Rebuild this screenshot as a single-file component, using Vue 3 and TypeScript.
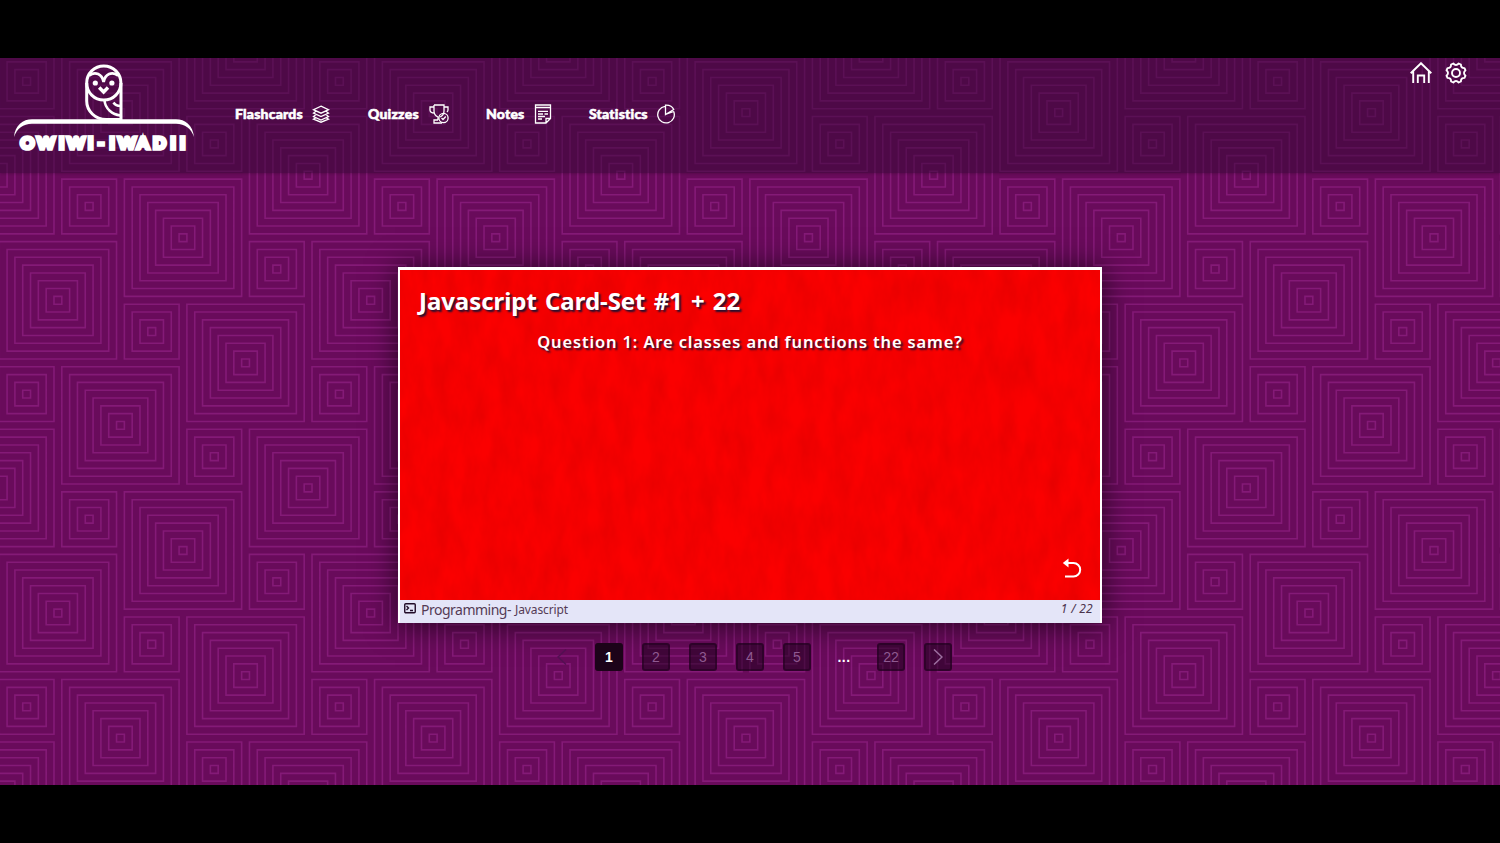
<script setup lang="ts">
const u = 62.55
const step = u / 8

function rings(cx: number, cy: number, count: number): string {
  let d = ''
  for (let k = 1; k <= count; k++) {
    const h = (k - 0.5) * step
    d += `M${(cx - h).toFixed(2)} ${(cy - h).toFixed(2)}h${(2 * h).toFixed(2)}v${(2 * h).toFixed(2)}h${(-2 * h).toFixed(2)}z`
  }
  return d
}

let patternPath = ''
for (let a = -12; a < 16; a++) {
  for (let b = -10; b < 16; b++) {
    const x = 57.9 + a * 2 * u + b * u
    const y = 242.3 - a * u + b * 2 * u
    if (x < -130 || x > 1630 || y < -130 || y > 860) continue
    patternPath += rings(x, y, 8) + rings(x + 0.5 * u, y - 1.5 * u, 4)
  }
}

const pages: string[] = ['1', '2', '3', '4', '5', '...', '22']
</script>

<template>
  <div class="screen">
    <div class="app">
      <svg class="pattern" width="1500" height="727" viewBox="0 0 1500 727"><path :d="patternPath" /></svg>

      <header class="header">
        <div class="brand">
          <svg class="owl" width="184" height="78" viewBox="0 0 184 78" fill="none">
            <g stroke="#fff" stroke-width="3">
              <path d="M74.700 20v18c0 10 8.500 18.500 19.500 18.500h14.800V20" />
              <circle cx="91.800" cy="20" r="17.100" />
              <path d="M77 12.500c6.500-4.500 13-1.500 14.600 6.500 1.600-8 8.100-11 14.600-6.500" stroke-width="2.800" />
              <path d="M92.500 37c.5 9 8 14.500 16 15.500M101.500 39.500c1.500 2.500 4 3.500 7 3.500" stroke-width="2.600" />
              <path d="M87.200 24.500l4.400 4.500 4.400-4.500" stroke-width="3.400" />
            </g>
            <circle cx="83.300" cy="20" r="2.600" fill="#fff" /><circle cx="99.900" cy="20" r="2.600" fill="#fff" />
            <path fill="#fff" d="M2 74C3 62 11 56.200 20 56.200H164c9 0 17 6 18 17.800-3-9-9-13-18-13.300H20C11 61 5 65 2 74z" />
          </svg>
          <svg class="wordmark" width="172" height="20" viewBox="0 0 172 20"><text x="8.500 27 42.500 57 71.500 82 93 108 124 140.500 154 163.500" y="15">OWIWI-IWADII</text></svg>
        </div>

        <nav class="nav">
          <a class="link l1"><span>Flashcards</span>
            <svg width="18" height="18" viewBox="0 0 18 18"><path d="M9 1.200l7.500 3.500L9 8.200 1.500 4.700zM4 6.200L1.500 8.100 9 11.600l7.500-3.500L14 6.200M4 9.600l-2.500 1.900L9 15l7.500-3.500L14 9.600M4 12.800l-2.500 1.400L9 17.200l7.500-3-2.500-1.400" /></svg></a>
          <a class="link l2"><span>Quizzes</span>
            <svg width="20" height="20" viewBox="0 0 20 20"><path d="M5 1h10v6c0 3-1.500 5-4 6M5 1v6c0 3 1.500 5 4 6v3M5 3H1v3c0 2 2 3 4.500 3M15 3h4v3c0 1-.5 1.500-1 2M9 16H5v3h8" /><circle cx="14.500" cy="14" r="4.600" /><path d="M12.500 14l1.500 1.500 2.800-3" /></svg></a>
          <a class="link l3"><span>Notes</span>
            <svg width="18" height="20" viewBox="0 0 18 20"><path d="M1.500 1h15v13.500L12 19H1.500zM1.500 3.500h15M12 19v-4.500h4.500M4 7.300h10M4 10h5M10.500 10h3.500M4 12.500h7M4 15h4" /></svg></a>
          <a class="link l4"><span>Statistics</span>
            <svg width="20" height="20" viewBox="0 0 20 20"><path d="M9 2.400a8.300 8.300 0 1 0 8.700 5.100M9.500 10.500V1.200c4-.2 7 1.500 8.200 4.300zM9.500 10.500l8.200-3" /></svg></a>
        </nav>

        <div class="tools">
          <svg width="22" height="22" viewBox="0 0 22 22"><path d="M.7 11.200L11 1.200l10.300 10M3.200 9v12M18.800 9v12M7.800 21v-7.500h6.400V21" /></svg>
          <svg width="22" height="22" viewBox="0 0 22 22"><path d="M8.300 1.500Q11 4.500 13.700 1.500L15.900 2.500Q15.800 6.200 19.500 6.100L20.500 8.300Q17.500 11 20.500 13.700L19.500 15.900Q15.800 15.800 15.900 19.500L13.700 20.500Q11 17.500 8.300 20.500L6.100 19.500Q6.200 15.800 2.500 15.900L1.500 13.700Q4.500 11 1.500 8.300L2.500 6.100Q6.200 6.200 6.100 2.500Z" stroke-linejoin="round" /><circle cx="11" cy="11" r="4" /></svg>
        </div>
      </header>

      <main class="main">
        <section class="card">
          <div class="face">
            <svg class="texture" width="700" height="331">
              <filter id="fibres" x="0" y="0" width="100%" height="100%">
                <feTurbulence type="fractalNoise" baseFrequency="0.06 0.025" numOctaves="5" seed="21" />
                <feColorMatrix values="0 0 0 0 0.5  0 0 0 0 0  0 0 0 0 0  0.45 0 0 0 -0.12" />
              </filter>
              <rect width="700" height="331" filter="url(#fibres)" />
            </svg>
            <h1>Javascript Card-Set #1 + 22</h1>
            <p>Question 1: Are classes and functions the same?</p>
            <svg class="flip" width="20" height="20" viewBox="0 0 20 20"><path d="M4 5h7.500a6.700 6.700 0 0 1 0 13.400H3" fill="none" stroke="#fff" stroke-width="2" /><path d="M.8 5L6.500.5v9z" fill="#fff" /></svg>
          </div>
          <footer class="foot">
            <svg width="12" height="11" viewBox="0 0 12 11"><rect x=".75" y=".75" width="10.500" height="9" rx="1" /><path d="M2.500 3l2 2-2 2M6 7.500h3" /></svg>
            <span class="topic">Programming-</span><span class="sub">Javascript</span>
            <em>1 / 22</em>
          </footer>
        </section>

        <div class="pager">
          <span class="page prev"><svg width="10" height="16" viewBox="0 0 10 16"><path d="M9 .5L1 8l8 7.500" /></svg></span>
          <span v-for="p in pages" :key="p" class="page" :class="{ active: p === '1', dots: p === '...' }">{{ p }}</span>
          <span class="page next"><svg width="10" height="16" viewBox="0 0 10 16"><path d="M1 .5L9 8l-8 7.500" /></svg></span>
        </div>
      </main>
    </div>
  </div>
</template>

<style>
html, body { background: #000; overflow: hidden; }
</style>

<style scoped>
.screen { box-sizing: border-box; width: 1500px; height: 843px; padding: 58px 0; background: #000; font-family: "Noto Sans", "Open Sans", sans-serif; }
.app { position: relative; height: 727px; background: #690b5b; overflow: hidden; }
.pattern { position: absolute; inset: 0; }
.pattern path { fill: none; stroke: #841a77; stroke-width: 1.600; }
.header { position: relative; display: flex; height: 115px; background: rgba(72, 8, 66, .25); background: rgba(54, 8, 54, .52); box-shadow: 0 0 3px rgba(0, 0, 0, .3); color: #fff; }
.brand { width: 208px; padding: 5px 0 0 12px; box-sizing: border-box; flex: none; }
.owl { display: block; }
.wordmark { display: block; margin: -7px 0 0 7px; overflow: visible; }
.wordmark text { font: 900 17px Lato, sans-serif; fill: #fff; stroke: #fff; stroke-width: 3.700px; text-anchor: middle; }
.nav { display: flex; padding: 0 0 3px 27px; align-items: center; }
.link { display: flex; align-items: center; justify-content: space-between; font: 900 14px Lato, sans-serif; -webkit-text-stroke: .6px #fff; }
.link span { letter-spacing: .2px; padding-bottom: 2px; }
.link svg, .tools svg { fill: none; stroke: #fff; stroke-width: 1.3; }
.l1 { width: 95px; margin-right: 38px; }
.l2 { width: 81px; margin-right: 37px; }
.l3 { width: 66px; margin-right: 37px; }
.l4 { width: 87px; }
.tools { display: flex; gap: 13px; margin-left: auto; padding: 4px 33px 0 0; }
.tools svg { stroke-width: 1.9; }
.main { position: relative; display: flex; flex-direction: column; align-items: center; padding-top: 94px; }
.card { box-sizing: border-box; width: 704px; height: 356px; border: 2px solid #fff; border-width: 3px 2px 0; background: #e4e5f8; box-shadow: 0 2px 26px 3px rgba(0, 0, 0, .55); }
.face { position: relative; box-sizing: border-box; height: 330px; padding: 13px 19px; background: #fb0000; color: #fff; overflow: hidden; }
.texture { position: absolute; inset: 0; }
h1 { position: relative; margin: 0; font-size: 24px; line-height: 36px; font-weight: 700; letter-spacing: -.05px; word-spacing: 2px; text-shadow: 2px 2px 2px #201030; white-space: nowrap; }
.face p { position: relative; margin: 11px 0 0; text-align: center; font-size: 16.500px; line-height: 24px; font-weight: 600; letter-spacing: .85px; text-shadow: 2px 2px 2px #201030; white-space: nowrap; }
.flip { position: absolute; right: 18px; bottom: 22px; }
.foot { display: flex; align-items: center; height: 22px; padding: 0 7px 3px 4px; box-sizing: border-box; margin: 0; color: #543b55; font-size: 14px; }
.foot svg { fill: none; stroke: #220d29; stroke-width: 1.4; margin: -2px 5px 0 0; }
.topic { letter-spacing: -.5px; }
.sub { font-size: 12px; margin-left: 4px; letter-spacing: -.1px; }
.foot em { margin-left: auto; font-size: 12px; letter-spacing: .3px; color: #4b334c; margin-top: -2px; }
.pager { display: flex; gap: 19px; margin-top: 20px; }
.page { box-sizing: border-box; width: 28px; height: 28px; display: flex; align-items: center; justify-content: center; border: 2px solid rgba(30, 0, 28, .5); border-radius: 3px; background: rgba(20, 0, 20, .48); color: #8f5a91; font: 14px "Liberation Sans", Arial, sans-serif; }
.page svg { fill: none; stroke: #9d70a0; stroke-width: 1.5; }
.page.active { background: #1c0319; border-color: #1c0319; color: #fff; font-weight: 700; }
.page.dots { background: none; border-color: transparent; color: #fff; font-weight: 700; letter-spacing: .5px; }
.page.prev { background: none; border-color: transparent; }
.prev svg { stroke: #531052; }
</style>
